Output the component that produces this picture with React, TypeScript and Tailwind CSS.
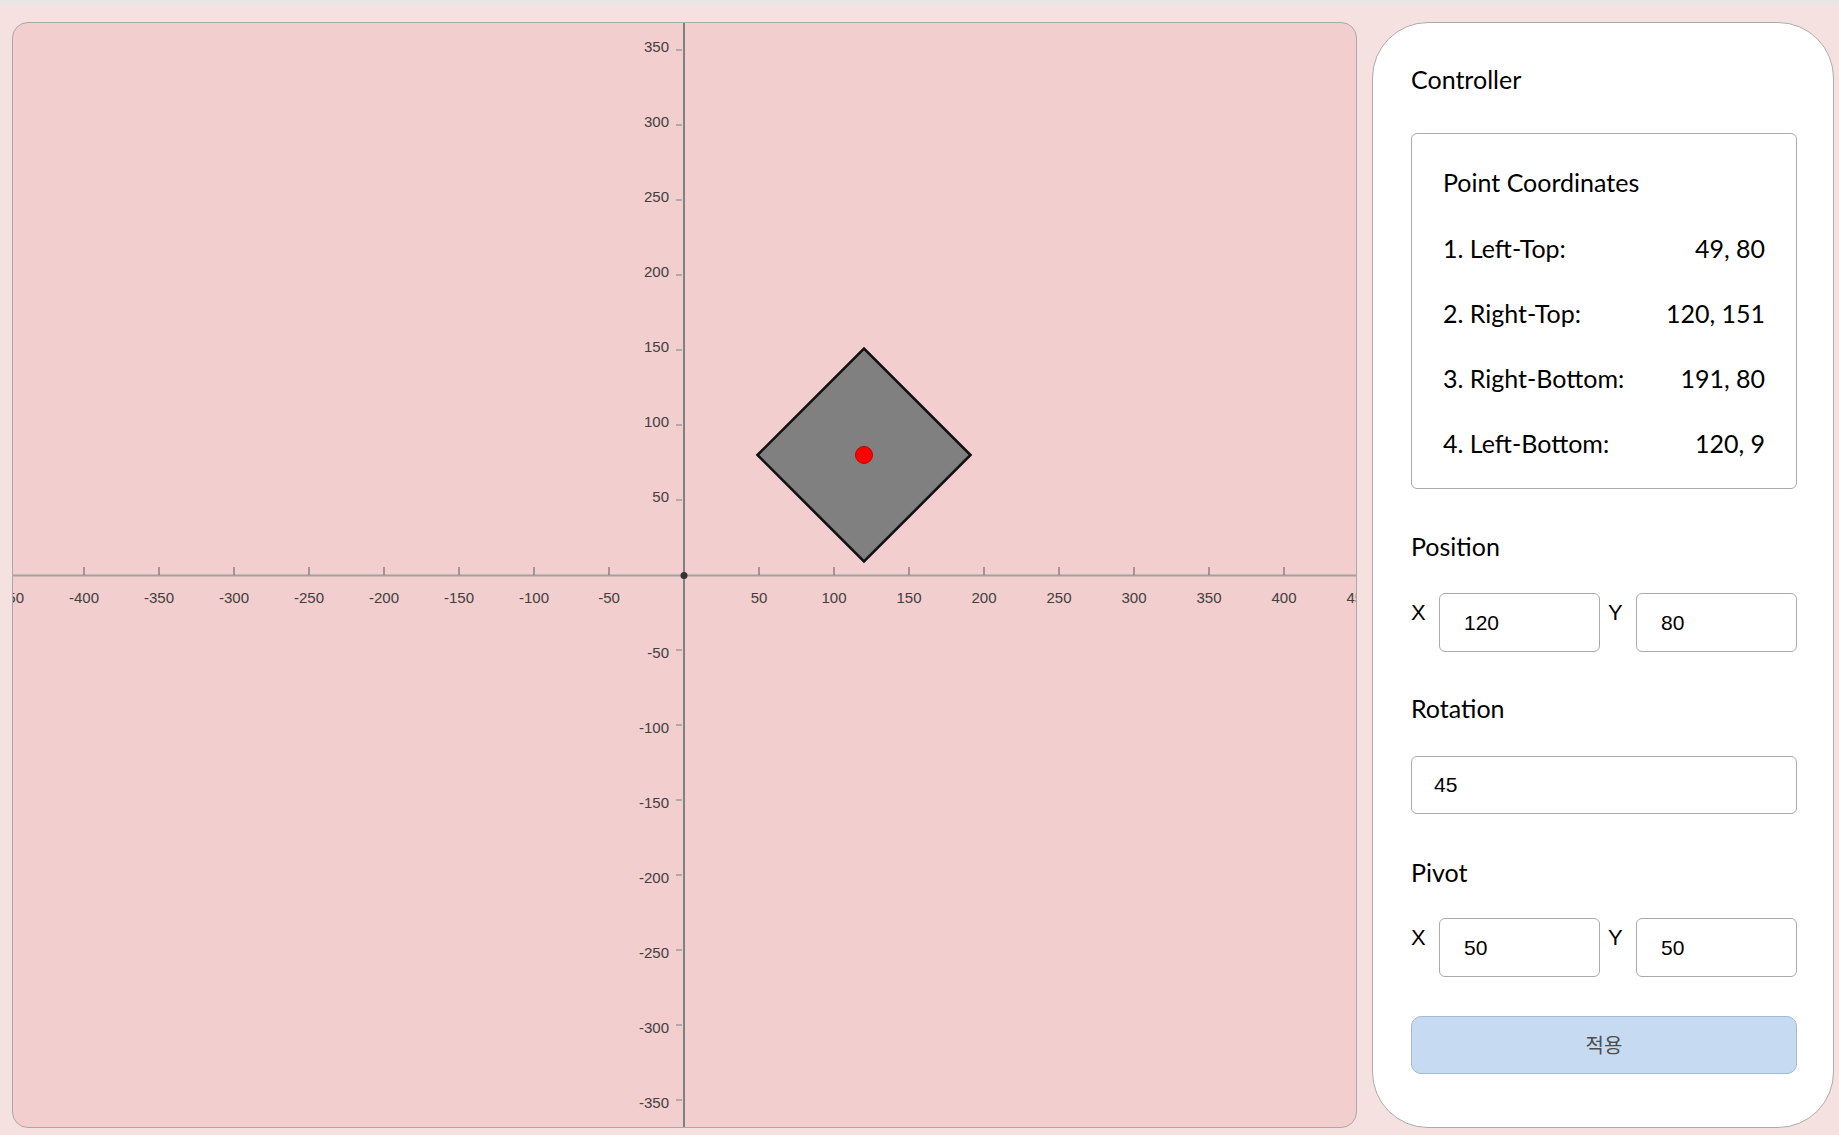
import React from "react";

const S = 1.5;
const OX = 671;
const OY = 552;
const px = (u: number) => OX + u * S;
const py = (v: number) => OY - v * S;

const points = [
  { name: "1. Left-Top:", x: 49, y: 80 },
  { name: "2. Right-Top:", x: 120, y: 151 },
  { name: "3. Right-Bottom:", x: 191, y: 80 },
  { name: "4. Left-Bottom:", x: 120, y: 9 },
];

const xTicks = [-450, -400, -350, -300, -250, -200, -150, -100, -50, 50, 100, 150, 200, 250, 300, 350, 400, 450];
const yTicks = [350, 300, 250, 200, 150, 100, 50, -50, -100, -150, -200, -250, -300, -350];

function Graph() {
  const poly = points.map((p) => `${px(p.x)},${py(p.y)}`).join(" ");
  return (
    <svg viewBox="0 0 1343 1104" className="block w-full h-full">
      {/* axes */}
      <line x1={0} y1={552.5} x2={1343} y2={552.5} stroke="#a2a2a2" strokeWidth={2} />
      <line x1={671} y1={0} x2={671} y2={1104} stroke="#808080" strokeWidth={2} />

      {xTicks.map((t) => (
        <g key={`x${t}`}>
          <line x1={px(t)} y1={544} x2={px(t)} y2={552} stroke="#5a5a5a" strokeWidth={1} />
          <text
            x={px(t)}
            y={580}
            textAnchor="middle"
            fontSize={15}
            fill="#404040"
            fontFamily="'Liberation Sans', Arial, sans-serif"
          >
            {t}
          </text>
        </g>
      ))}

      {yTicks.map((t) => (
        <g key={`y${t}`}>
          <line x1={663} y1={py(t)} x2={669} y2={py(t)} stroke="#acacac" strokeWidth={2} />
          <text
            x={656}
            y={py(t) + (t > 0 ? 2 : 8)}
            textAnchor="end"
            fontSize={15}
            fill="#404040"
            fontFamily="'Liberation Sans', Arial, sans-serif"
          >
            {t}
          </text>
        </g>
      ))}

      <circle cx={671} cy={552.5} r={3.5} fill="#333" />

      <polygon points={poly} fill="#808080" stroke="#111" strokeWidth={2.6} strokeLinejoin="miter" />
      <circle cx={px(120)} cy={py(80)} r={8.5} fill="#ff0000" stroke="#c40000" strokeWidth={1} />
    </svg>
  );
}

function NumInput({ value, className = "" }: { value: string; className?: string }) {
  return (
    <input
      type="text"
      size={1}
      defaultValue={value}
      className={`min-w-0 border border-[#aaaaaa] rounded-[6px] bg-white text-[21px] text-black outline-none font-['Liberation_Sans',Arial,sans-serif] ${className}`}
    />
  );
}

function PairRow({ x, y }: { x: string; y: string }) {
  return (
    <div className="flex gap-[8px]">
      {[
        { l: "X", v: x },
        { l: "Y", v: y },
      ].map((p) => (
        <div key={p.l} className="flex flex-1 min-w-0 items-start">
          <span className="w-[28px] shrink-0 pt-[7px] text-[22px] leading-[26px] text-black font-['Liberation_Sans',Arial,sans-serif]">
            {p.l}
          </span>
          <NumInput value={p.v} className="flex-1 w-0 h-[59px] pl-[24px]" />
        </div>
      ))}
    </div>
  );
}

export default function App() {
  return (
    <div className="min-h-screen bg-[#f6e1e1] font-['Lato',sans-serif]">
      <div className="h-[5px] bg-[#e8e6e5]" />
      <div className="flex gap-[15px] pl-[12px] pr-[5px] pt-[17px] pb-[7px]">
        {/* Canvas */}
        <div className="flex-1 h-[1106px] rounded-[16px] border border-[#a9a9a9] bg-[#f2cece] overflow-hidden">
          <Graph />
        </div>

        {/* Controller */}
        <div className="w-[462px] h-[1106px] shrink-0 rounded-[56px] border border-[#ababab] bg-white pl-[38px] pr-[36px] pt-[41px]">
          <h2 className="text-[25px] leading-[30px] text-black">Controller</h2>

          <div className="mt-[39px] h-[356px] rounded-[6px] border border-[#aaaaaa] px-[31px] pt-[33px]">
            <h3 className="text-[25px] leading-[30px] text-black">Point Coordinates</h3>
            <div className="mt-[36px] flex flex-col gap-[35px]">
              {points.map((p) => (
                <div key={p.name} className="flex justify-between text-[25px] leading-[30px] text-black">
                  <span>{p.name}</span>
                  <span>
                    {p.x}, {p.y}
                  </span>
                </div>
              ))}
            </div>
          </div>

          <h3 className="mt-[42px] text-[25px] leading-[30px] text-black">Position</h3>
          <div className="mt-[32px]">
            <PairRow x="120" y="80" />
          </div>

          <h3 className="mt-[41px] text-[25px] leading-[30px] text-black">Rotation</h3>
          <NumInput value="45" className="mt-[33px] block w-full h-[58px] pl-[22px]" />

          <h3 className="mt-[43px] text-[25px] leading-[30px] text-black">Pivot</h3>
          <div className="mt-[31px]">
            <PairRow x="50" y="50" />
          </div>

          <button
            type="button"
            className="mt-[39px] w-full h-[58px] rounded-[10px] border border-[#a3b9d3] bg-[#c6daf2] text-[20px] text-[#4d4d4d] font-['Noto_Sans_CJK_KR',sans-serif]"
          >
            적용
          </button>
        </div>
      </div>
    </div>
  );
}
